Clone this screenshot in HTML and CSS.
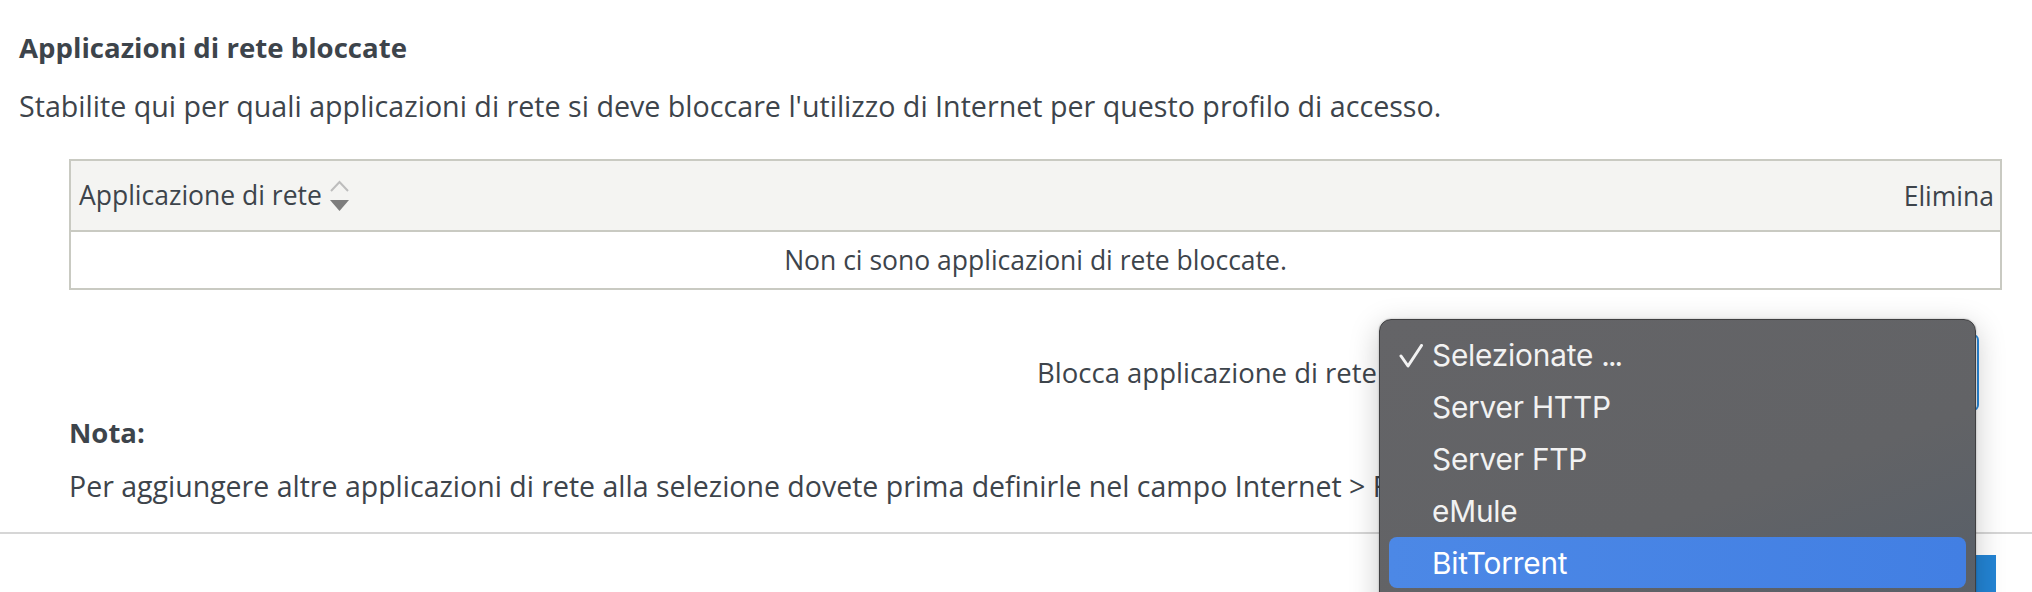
FILE: index.html
```html
<!DOCTYPE html>
<html lang="it">
<head>
<meta charset="utf-8">
<title>Applicazioni di rete bloccate</title>
<link rel="stylesheet" href="styles.css">
</head>
<body>
<div class="page">
  <section class="content">
    <h2 class="title">Applicazioni di rete bloccate</h2>
    <p class="intro">Stabilite qui per quali applicazioni di rete si deve bloccare l'utilizzo di Internet per questo profilo di accesso.</p>
    <div class="indent">
      <table class="apps">
        <thead>
          <tr>
            <th class="col-app">Applicazione di rete <span class="sort"><svg width="21" height="31" viewBox="0 0 21 31"><path d="M2 11 L10.5 2 L19 11" fill="none" stroke="#bdbdbd" stroke-width="2"/><path d="M1 20 L20 20 L10.5 31 Z" fill="#7d7d7d"/></svg></span></th>
            <th class="col-del">Elimina</th>
          </tr>
        </thead>
        <tbody>
          <tr><td colspan="2" class="empty">Non ci sono applicazioni di rete bloccate.</td></tr>
        </tbody>
      </table>
      <div class="add-row">
        <label class="add-label">Blocca applicazione di rete</label>
        <div class="select">Selezionate ...</div>
      </div>
      <div class="note">
        <div class="note-head">Nota:</div>
        <p class="note-text">Per aggiungere altre applicazioni di rete alla selezione dovete prima definirle nel campo Internet &gt; Filtri &gt; Liste.</p>
      </div>
    </div>
  </section>
  <div class="divider"></div>
  <div class="buttons">
    <button class="btn-primary">OK</button>
  </div>
  <div class="popup-menu">
    <div class="menu-item"><span class="check"><svg width="24" height="24" viewBox="0 0 24 24"><path d="M2 12 L9 22 L22.5 1.5" fill="none" stroke="#f2f2f2" stroke-width="3" stroke-linecap="round" stroke-linejoin="round"/></svg></span>Selezionate <span class="dots">...</span></div>
    <div class="menu-item"><span class="check"></span>Server HTTP</div>
    <div class="menu-item"><span class="check"></span>Server FTP</div>
    <div class="menu-item"><span class="check"></span>eMule</div>
    <div class="menu-item active"><span class="check"></span>BitTorrent</div>
    <div class="menu-item"><span class="check"></span>Altro</div>
  </div>
</div>
</body>
</html>
```

FILE: styles.css
```css
* { box-sizing: border-box; }
html, body {
  margin: 0;
  padding: 0;
  background: #ffffff;
  overflow: hidden;
}
body {
  font-family: "Open Sans", "Lato", sans-serif;
  color: #3d444b;
  font-size: 28px;
}
.page {
  position: relative;
  width: 2032px;
  height: 592px;
  overflow: hidden;
}
.content {
  padding: 29px 0 0 19px;
}
.title {
  margin: 0;
  font-size: 27.6px;
  line-height: 36px;
  font-weight: 700;
}
.intro {
  margin: 23px 0 0 0;
  font-size: 28.65px;
  line-height: 36px;
  white-space: nowrap;
}
.indent {
  padding-left: 50px;
  width: 1983px;
}
.apps {
  margin-top: 35px;
  width: 1933px;
  border-collapse: collapse;
  border: 2px solid #c9cac2;
  font-size: 26.5px;
}
.apps th {
  background: #f4f4f2;
  font-weight: 400;
  height: 71px;
  padding: 0 8px;
  border-bottom: 2px solid #c9cac2;
  white-space: nowrap;
}
.col-app { text-align: left; }
.col-del { text-align: right; padding-right: 6px !important; }
.sort {
  display: inline-block;
  vertical-align: middle;
  margin-left: 0;
  position: relative;
  top: -3px;
}
.sort svg { display: block; }
.empty {
  height: 58px;
  text-align: center;
  padding: 0;
}
.add-row {
  display: flex;
  justify-content: flex-end;
  align-items: center;
  gap: 14px;
  margin-top: 44px;
  width: 1910px;
}
.add-label { line-height: 36px; white-space: nowrap; font-size: 27.5px; }
.select {
  width: 588px;
  height: 77px;
  border: 2px solid #2a88d8;
  border-radius: 6px;
  padding: 0 16px;
  display: flex;
  align-items: center;
}
.note {
  margin-top: 4px;
}
.note-head {
  font-weight: 700;
  font-size: 27.5px;
  line-height: 36px;
}
.note-text {
  margin: 17px 0 0 0;
  font-size: 28.5px;
  line-height: 36px;
  white-space: nowrap;
}
.divider {
  margin-top: 28px;
  height: 2px;
  background: #d6d6d6;
  width: 100%;
}
.buttons {
  display: flex;
  justify-content: flex-end;
  padding: 21px 36px 0 0;
}
.btn-primary {
  width: 120px;
  height: 60px;
  border: none;
  border-radius: 0;
  background: #2384d4;
  color: #fff;
  font-family: inherit;
  font-size: 26px;
}
.popup-menu {
  position: absolute;
  left: 1379px;
  top: 319px;
  width: 597px;
  height: 340px;
  background: linear-gradient(160deg, #646467 0%, #626366 55%, #5a6068 80%, #5e6266 100%);
  border: 1.5px solid #3f3f41;
  border-radius: 12px;
  box-shadow: 0 8px 30px rgba(0,0,0,0.22), 0 0 2px rgba(0,0,0,0.3);
  padding: 9px 9px;
  font-family: "Inter", "Roboto", sans-serif;
  color: #f2f2f2;
}
.menu-item {
  height: 52px;
  display: flex;
  align-items: center;
  font-size: 29.8px;
  padding-left: 10px;
  border-radius: 8px;
  letter-spacing: -0.2px;
  white-space: pre;
}
.dots { letter-spacing: -2px; }
.menu-item.active {
  background: linear-gradient(90deg, #4c88e6, #427fe3);
  color: #ffffff;
  height: 51px;
}
.check {
  display: flex;
  align-items: center;
  width: 33px;
  height: 24px;
}
.check svg { display: block; margin-top: 1px; }
```
